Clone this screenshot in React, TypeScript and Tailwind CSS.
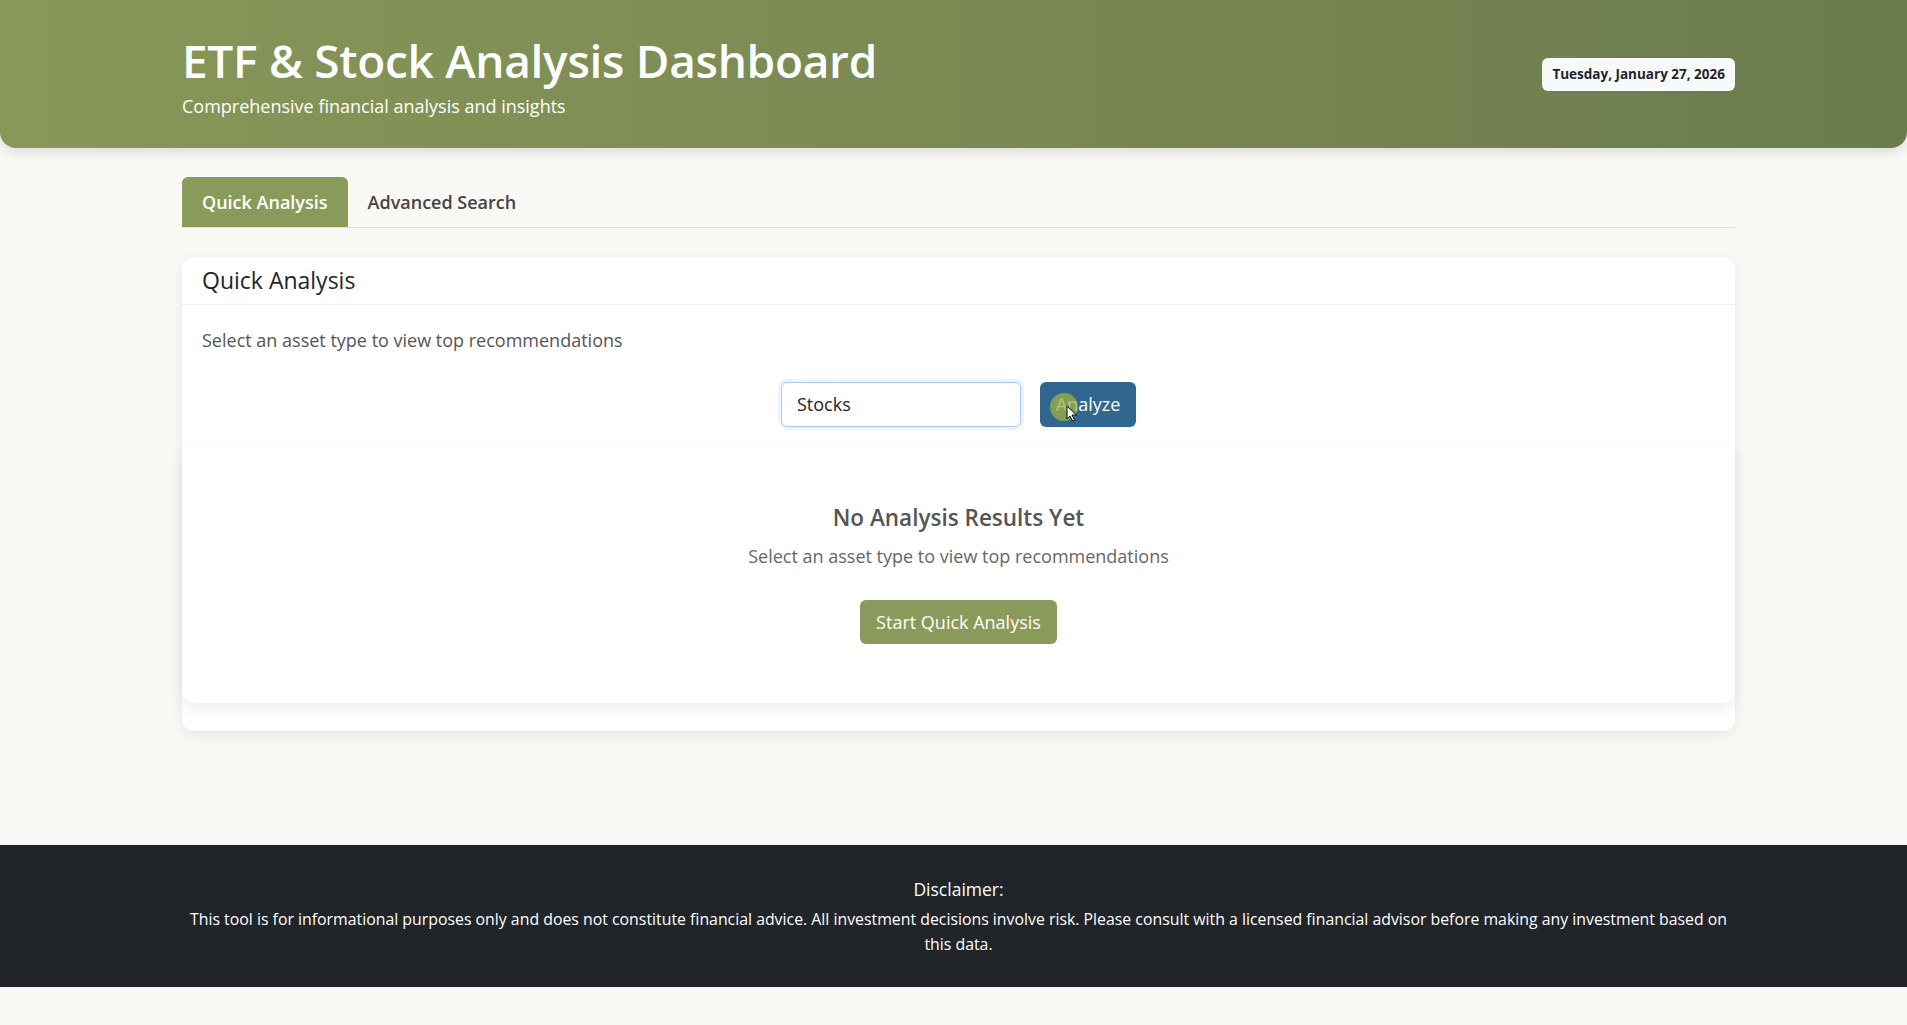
import React from "react";

const font = { fontFamily: '"Open Sans", "Noto Sans", sans-serif' };

export default function App() {
  return (
    <div className="min-h-[1025px] bg-[#f8f8f4] text-[#212529]" style={font}>
      {/* Header */}
      <header className="h-[148px] rounded-b-[16px] bg-gradient-to-r from-[#889859] to-[#6c7b4c] shadow-[0_4px_12px_rgba(0,0,0,0.12)]">
        <div className="ml-[182px] w-[1553px] h-full flex items-center justify-between">
          <div className="flex flex-col self-start pt-[32px]">
            <h1 className="text-[46px] leading-[56px] font-semibold text-white tracking-[-0.3px]">
              ETF &amp; Stock Analysis Dashboard
            </h1>
            <p className="text-[18px] leading-[26px] text-white mt-[5px]">
              Comprehensive financial analysis and insights
            </p>
          </div>
          <span className="rounded-[6px] bg-[#f8f9fa] px-[10px] py-[8px] text-[13.5px] leading-[17px] font-bold text-[#212529]">
            Tuesday, January 27, 2026
          </span>
        </div>
      </header>

      <main className="ml-[182px] w-[1553px] pt-[29px]">
        {/* Tabs */}
        <div className="flex border-b border-[#dee2e6]">
          <button className="h-[50px] px-[20px] rounded-t-[6px] bg-[#8a9a5b] text-white text-[18px] font-semibold">
            Quick Analysis
          </button>
          <button className="h-[50px] px-[20px] text-[#444] text-[18px] font-semibold">
            Advanced Search
          </button>
        </div>

        {/* Card */}
        <section className="mt-[29px] rounded-[12px] bg-white shadow-[0_4px_14px_rgba(0,0,0,0.07)] pb-[28px]">
          <div className="h-[48px] flex items-center px-[20px] border-b border-[#eceeef]">
            <h5 className="text-[23px] font-medium text-[#212529]">Quick Analysis</h5>
          </div>
          <div className="px-[20px] pt-[21px]">
            <p className="text-[18px] leading-[28px] text-[#555]">
              Select an asset type to view top recommendations
            </p>
            <div className="flex justify-center gap-[19px] mt-[28px]">
              <div className="w-[240px] h-[45px] rounded-[6px] border border-[#a9c9ef] shadow-[0_0_0_3px_rgba(13,110,253,0.08)] bg-white flex items-center px-[15px] text-[18px] text-[#212529]">
                Stocks
              </div>
              <button className="relative w-[96px] h-[45px] rounded-[6px] bg-[#31668f] text-white text-[18px]">
                Analyze
                <span className="absolute left-[10px] top-[11px] w-[28px] h-[28px] rounded-full bg-[#9cb043]/75" />
                <svg className="absolute left-[26px] top-[23px]" width="12" height="17" viewBox="0 0 12 17">
                  <path d="M1 1 L1 14 L4 11 L6.5 16 L8.5 15 L6 10 L10.5 10 Z" fill="#fff" stroke="#000" strokeWidth="1" />
                </svg>
              </button>
            </div>
          </div>
          <div className="mt-[19px] h-[257px] rounded-b-[12px] bg-white shadow-[0_6px_14px_rgba(0,0,0,0.07)] flex flex-col items-center pt-[56px]">
            <h4 className="text-[22.5px] leading-[32px] font-semibold text-[#555]">No Analysis Results Yet</h4>
            <p className="mt-[9px] text-[18px] leading-[26px] text-[#666]">
              Select an asset type to view top recommendations
            </p>
            <button className="mt-[31px] h-[44px] px-[16px] rounded-[6px] bg-[#8a9a5b] text-white text-[18px]">
              Start Quick Analysis
            </button>
          </div>
        </section>
      </main>

      {/* Footer */}
      <footer className="mt-[114px] h-[142px] bg-[#212529] text-white pt-[31px]">
        <div className="ml-[182px] w-[1553px] flex flex-col items-center">
          <p className="text-[17.5px] leading-[26px]">Disclaimer:</p>
          <p className="mt-[5px] text-[15.85px] leading-[25px] text-center">
            This tool is for informational purposes only and does not constitute financial advice. All investment decisions involve risk. Please consult with a licensed financial advisor before making any investment based on this data.
          </p>
        </div>
      </footer>
    </div>
  );
}
